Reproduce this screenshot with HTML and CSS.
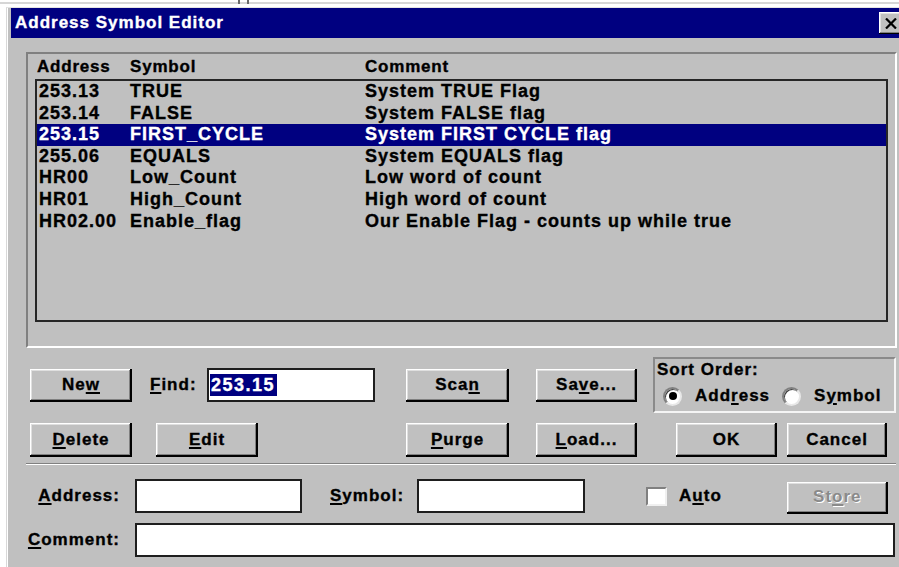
FILE: index.html
```html
<!DOCTYPE html>
<html lang="en">
<head>
<meta charset="utf-8">
<title>Address Symbol Editor</title>
<link rel="stylesheet" href="styles.css">
</head>
<body>
<div class="topstrip"><span class="tick"></span><span class="tick"></span></div>
<div class="window">
  <div class="window-inner">
    <div class="titlebar">
      <span class="title">Address Symbol Editor</span>
      <button class="close" type="button" aria-label="Close">
        <svg width="12" height="11" viewBox="0 0 12 11"><path d="M1 0.5 L11 10.5 M11 0.5 L1 10.5" stroke="#000" stroke-width="2.2" fill="none"/></svg>
      </button>
    </div>
    <div class="client">
      <div class="listframe">
        <div class="list-head">
          <span class="c-addr">Address</span><span class="c-sym">Symbol</span><span class="c-com">Comment</span>
        </div>
        <div class="listbox">
          <div class="row"><span class="c-addr">253.13</span><span class="c-sym">TRUE</span><span class="c-com">System TRUE Flag</span></div>
          <div class="row"><span class="c-addr">253.14</span><span class="c-sym">FALSE</span><span class="c-com">System FALSE flag</span></div>
          <div class="row selected"><span class="c-addr">253.15</span><span class="c-sym">FIRST_CYCLE</span><span class="c-com">System FIRST CYCLE flag</span></div>
          <div class="row"><span class="c-addr">255.06</span><span class="c-sym">EQUALS</span><span class="c-com">System EQUALS flag</span></div>
          <div class="row"><span class="c-addr">HR00</span><span class="c-sym">Low_Count</span><span class="c-com">Low word of count</span></div>
          <div class="row"><span class="c-addr">HR01</span><span class="c-sym">High_Count</span><span class="c-com">High word of count</span></div>
          <div class="row"><span class="c-addr">HR02.00</span><span class="c-sym">Enable_flag</span><span class="c-com">Our Enable Flag - counts up while true</span></div>
        </div>
      </div>

      <div class="ctl-row row-a">
        <div class="btn w102">Ne<u>w</u></div>
        <span class="lbl find-lbl"><u>F</u>ind:</span>
        <div class="field find-field"><span class="sel-text">253.15</span></div>
        <div class="btn w103 ml-scan">Sca<u>n</u></div>
        <div class="btn w101 ml-save">Sa<u>v</u>e...</div>
        <div class="sortbox">
          <div class="sort-title">Sort Order:</div>
          <div class="radios">
            <span class="radio on"></span><span class="radio-lbl">Add<u>r</u>ess</span>
            <span class="radio"></span><span class="radio-lbl">S<u>y</u>mbol</span>
          </div>
        </div>
      </div>

      <div class="ctl-row row-b">
        <div class="btn w102"><u>D</u>elete</div>
        <div class="btn w102 ml-edit"><u>E</u>dit</div>
        <div class="btn w103 ml-purge"><u>P</u>urge</div>
        <div class="btn w101 ml-save"><u>L</u>oad...</div>
        <div class="btn w101 ml-ok">OK</div>
        <div class="btn w100 ml-cancel">Cancel</div>
      </div>

      <div class="separator"></div>

      <div class="form-row row-c">
        <span class="lbl flabel"><u>A</u>ddress:</span>
        <div class="field addr-field"></div>
        <span class="lbl sym-lbl"><u>S</u>ymbol:</span>
        <div class="field sym-field"></div>
        <span class="check"></span>
        <span class="lbl auto-lbl">A<u>u</u>to</span>
        <div class="btn w101 store disabled">St<u>o</u>re</div>
      </div>

      <div class="form-row row-d">
        <span class="lbl flabel"><u>C</u>omment:</span>
        <div class="field comment-field"></div>
      </div>
    </div>
  </div>
</div>
</body>
</html>
```

FILE: styles.css
```css
/* Address Symbol Editor dialog, classic grey 3D style */
html, body {
  margin: 0;
  height: 100%;
}

body {
  background: #fff;
  overflow: hidden;
  font-family: "Liberation Sans", Arial, sans-serif;
  font-weight: bold;
  font-size: 17px;
  letter-spacing: 1px;
  color: #000;
  -webkit-text-stroke: 0.35px currentColor;
}

u {
  text-decoration-thickness: 2px;
  text-underline-offset: 2px;
}

/* thin strip above the window */
.topstrip {
  height: 7px;
  box-sizing: border-box;
  padding-left: 238px;
  display: flex;
  gap: 7px;
  background: linear-gradient(#fff 0 2px, #d6d6d6 2px 4px, #fff 4px);
}

.tick {
  width: 2px;
  height: 4px;
  background: #6a6a6a;
}

/* window frame */
.window {
  margin-left: 6px;
  width: max-content;
  border-left: 1px solid #d8d8d8;
  border-top: 1px solid #e4e4e4;
}

.window-inner {
  width: 896px;
  height: 560px;
  border-left: 1px solid #fff;
  padding-left: 3px;
  background: #c0c0c0;
}

.titlebar {
  height: 30px;
  box-sizing: border-box;
  padding: 0 4px;
  background: #000080;
  color: #fff;
  display: flex;
  align-items: center;
  justify-content: space-between;
}

.title {
  font-size: 17px;
  letter-spacing: 1px;
}

.close {
  width: 24px;
  height: 22px;
  padding: 0;
  border: 0;
  background: #c0c0c0;
  box-shadow: inset -1px -1px #000, inset 1px 1px #fff, inset -2px -2px #808080, inset 2px 2px #dfdfdf;
  display: flex;
  align-items: center;
  justify-content: center;
}

.client {
  padding: 14px 0 0 15px;
}

/* symbol list */
.listframe {
  box-sizing: border-box;
  width: 871px;
  height: 296px;
  border: 2px solid;
  border-color: #808080 #fff #fff #808080;
  padding-left: 7px;
}

.list-head {
  height: 25px;
  line-height: 25px;
  display: flex;
  padding-left: 2px;
  letter-spacing: 0.8px;
}

.c-addr { width: 93px; flex: none; }
.c-sym { width: 235px; flex: none; }
.c-com { flex: 1; white-space: nowrap; }

.listbox {
  box-sizing: border-box;
  width: 853px;
  height: 243px;
  border: 2px solid #262626;
}

.row {
  display: flex;
  height: 21.6px;
  line-height: 21.6px;
  font-size: 18px;
  letter-spacing: 1px;
  white-space: nowrap;
}

.row .c-addr { padding-left: 2px; width: 91px; }

.row.selected {
  background: #000080;
  color: #fff;
}

/* buttons and fields */
.ctl-row {
  display: flex;
  align-items: center;
  margin-left: 4px;
}

.row-a {
  margin-top: 9px;
  height: 56px;
}

.row-b {
  margin-top: 10px;
  height: 34px;
}

.btn {
  box-sizing: border-box;
  height: 33px;
  flex: none;
  background: #c0c0c0;
  box-shadow: inset -2px -2px #000, inset 1px 1px #fff, inset -3px -3px #808080, inset 2px 2px #dfdfdf;
  display: flex;
  align-items: center;
  justify-content: center;
  padding-bottom: 1px;
}

.row-b .btn { height: 34px; }

.w100 { width: 100px; }
.w101 { width: 101px; }
.w102 { width: 102px; }
.w103 { width: 103px; }

.ml-scan { margin-left: 31px; }
.ml-save { margin-left: 27px; }
.ml-edit { margin-left: 24px; }
.ml-purge { margin-left: 148px; }
.ml-ok { margin-left: 39px; }
.ml-cancel { margin-left: 10px; }

.lbl { white-space: nowrap; }

.find-lbl {
  margin-left: 18px;
  width: 57px;
}

.field {
  box-sizing: border-box;
  height: 34px;
  flex: none;
  background: #fff;
  border: 2px solid #1e1e1e;
  display: flex;
  align-items: center;
}

.find-field {
  width: 168px;
  padding-left: 1px;
}

.sel-text {
  background: #000080;
  color: #fff;
  font-size: 18px;
  letter-spacing: 1.5px;
  line-height: 22px;
  padding: 0 2px 0 1px;
}

/* sort order group */
.sortbox {
  box-sizing: border-box;
  margin-left: 16px;
  width: 243px;
  height: 56px;
  border: 2px solid;
  border-color: #8a8a8a #f4f4f4 #f4f4f4 #8a8a8a;
  padding: 1px 0 0 2px;
}

.sort-title {
  line-height: 20px;
}

.radios {
  display: flex;
  align-items: center;
  margin-top: 6px;
  padding-left: 6px;
}

.radio {
  box-sizing: border-box;
  width: 19px;
  height: 19px;
  border-radius: 50%;
  background: #fff;
  border: 2px solid;
  border-color: #808080 #e8e8e8 #e8e8e8 #808080;
  box-shadow: inset 1px 1px #404040;
  display: flex;
  align-items: center;
  justify-content: center;
  flex: none;
}

.radio.on::after {
  content: "";
  width: 8px;
  height: 8px;
  border-radius: 50%;
  background: #000;
}

.radio-lbl {
  margin-left: 13px;
  margin-right: 12px;
}

.separator {
  width: 870px;
  height: 0;
  margin-top: 6px;
  border-top: 1px solid #808080;
  border-bottom: 1px solid #fff;
}

.form-row {
  display: flex;
  align-items: center;
  height: 34px;
}

.row-c { margin-top: 14px; }
.row-d { margin-top: 10px; }

.flabel {
  width: 94px;
  text-align: right;
  margin-right: 15px;
  flex: none;
}

.addr-field { width: 167px; }

.sym-lbl {
  margin-left: 28px;
  margin-right: 13px;
}

.sym-field { width: 168px; }

.check {
  box-sizing: border-box;
  width: 21px;
  height: 19px;
  margin-left: 61px;
  background: #fff;
  border: 2px solid;
  border-color: #808080 #f0f0f0 #f0f0f0 #808080;
  flex: none;
}

.auto-lbl { margin-left: 12px; }

.store {
  margin-left: 65px;
  height: 32px;
  margin-top: 3px;
}

.btn.disabled {
  color: #8a8a8a;
  text-shadow: 1px 1px #fff;
  -webkit-text-stroke: 0;
}

.comment-field { width: 760px; }
```
